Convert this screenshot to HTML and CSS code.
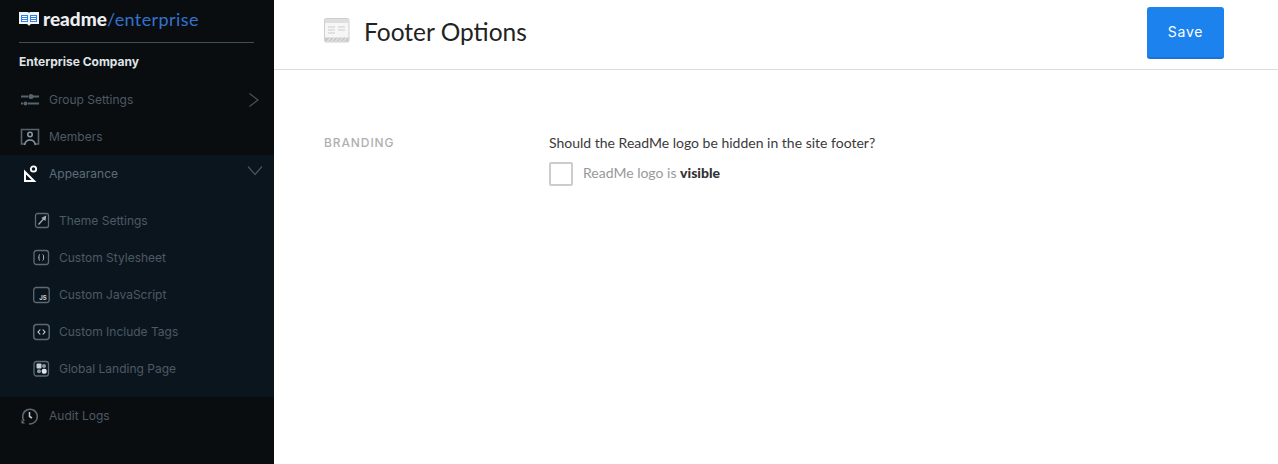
FILE: index.html
```html
<!DOCTYPE html>
<html lang="en">
<head>
    <meta charset="UTF-8">
    <title>Footer Options</title>
    <link rel="stylesheet" href="styles.css">
</head>
<body>
    <aside class="sidebar">
        <div class="brand">
            <svg class="brand-icon" width="20" height="14" viewBox="0 0 20 14">
                <path d="M0 0h8q2 0 2 1 0-1 2-1h8v12h-7.500q-1.500 0-2.500 2-1-2-2.500-2H0z" fill="#f2f4f5"/>
                <rect x="2" y="3" width="7" height="7" fill="#2f7fe8"/>
                <rect x="11" y="3" width="7" height="7" fill="#2f7fe8"/>
                <path d="M3 4.500h5M3 6.500h5M3 8.500h5M12 4.500h5M12 6.500h5M12 8.500h5" stroke="#fff" stroke-width="1"/>
            </svg>
            <span class="brand-name">readme</span><span class="brand-suffix">/enterprise</span>
        </div>
        <div class="company">Enterprise Company</div>

        <a class="nav-item">
            <svg class="nav-icon" width="20" height="20" viewBox="0 0 20 20">
                <path d="M1 6.500h7M13 6.500h6M1 13.500h2M8 13.500h11" stroke="#56646f" stroke-width="2"/>
                <circle cx="11" cy="6.500" r="2.500" fill="#56646f"/>
                <circle cx="5.500" cy="13.500" r="2" fill="#56646f"/>
            </svg>
            Group Settings
            <svg class="chevron" width="12" height="16" viewBox="0 0 12 16"><path d="M1.500 1.500 10 8l-8.500 6.500" fill="none" stroke="#46535e" stroke-width="1.200"/></svg>
        </a>
        <a class="nav-item">
            <svg class="nav-icon" width="20" height="20" viewBox="0 0 20 20">
                <path d="M4 17H1.500V2.500h17V17H16" fill="none" stroke="#56646f" stroke-width="1.600"/>
                <circle cx="10" cy="7.500" r="2.200" fill="none" stroke="#8a98a2" stroke-width="1.600"/>
                <path d="M4.500 18q1-5 5.500-5t5.500 5" fill="none" stroke="#8a98a2" stroke-width="1.600"/>
            </svg>
            Members
        </a>

        <div class="nav-group">
            <a class="nav-item nav-item-open">
                <svg class="nav-icon" width="20" height="20" viewBox="0 0 20 20">
                    <path d="M5 8v9h9z" fill="none" stroke="#fff" stroke-width="2"/>
                    <circle cx="13.500" cy="5" r="2.700" fill="none" stroke="#fff" stroke-width="1.800"/>
                </svg>
                Appearance
                <svg class="chevron chevron-down" width="16" height="12" viewBox="0 0 16 12"><path d="M1 1.500 8 9.500l7-8" fill="none" stroke="#46535e" stroke-width="1.200"/></svg>
            </a>
            <div class="sub-list">
                <a class="sub-item">
                    <svg class="sub-icon" width="18" height="18" viewBox="0 0 18 18">
                        <rect x="2.500" y="1.500" width="13" height="14" rx="2" fill="none" stroke="#5a6a76" stroke-width="1.300"/>
                        <path d="M5.500 12.500 10.500 7M9.500 6 12.500 4.500l-.5 3.500z" stroke="#a4b0b8" stroke-width="1.200" fill="#a4b0b8"/>
                    </svg>
                    Theme Settings
                </a>
                <a class="sub-item">
                    <svg class="sub-icon" width="18" height="18" viewBox="0 0 18 18">
                        <rect x="1" y="1.500" width="14.500" height="14" rx="2.500" fill="none" stroke="#5a6a76" stroke-width="1.300"/>
                        <path d="M7 5.500Q5.500 5.500 6 8.500L5.400 8.500 6 8.500Q5.500 11.500 7 11.500M9.500 5.500Q11 5.500 10.500 8.500L11.100 8.500 10.500 8.500Q11 11.500 9.500 11.500" fill="none" stroke="#a4b0b8" stroke-width="1"/>
                    </svg>
                    Custom Stylesheet
                </a>
                <a class="sub-item">
                    <svg class="sub-icon" width="18" height="18" viewBox="0 0 18 18">
                        <rect x="0.700" y="1.500" width="15.500" height="15" rx="2.500" fill="none" stroke="#5a6a76" stroke-width="1.300"/>
                        <text x="6.200" y="13.500" class="js-text">JS</text>
                    </svg>
                    Custom JavaScript
                </a>
                <a class="sub-item">
                    <svg class="sub-icon" width="18" height="18" viewBox="0 0 18 18">
                        <rect x="0.700" y="1.500" width="15.500" height="15" rx="3" fill="none" stroke="#5a6a76" stroke-width="1.500"/>
                        <path d="M7.300 6.500 5 9l2.300 2.500M9.700 6.500 12 9l-2.300 2.500" fill="none" stroke="#d5dbde" stroke-width="1.100"/>
                    </svg>
                    Custom Include Tags
                </a>
                <a class="sub-item">
                    <svg class="sub-icon" width="18" height="18" viewBox="0 0 18 18">
                        <rect x="1" y="1.500" width="14.500" height="14.500" rx="2.500" fill="none" stroke="#5a6a76" stroke-width="1.300"/>
                        <rect x="3.500" y="3.500" width="5" height="5" rx="1" fill="#c8d0d5"/>
                        <circle cx="11" cy="6" r="2" fill="#8a98a2"/>
                        <circle cx="6" cy="11.200" r="2" fill="#8a98a2"/>
                        <rect x="8.700" y="8.800" width="5" height="5" rx="2" fill="#e2e6e8"/>
                    </svg>
                    Global Landing Page
                </a>
            </div>
        </div>

        <a class="nav-item">
            <svg class="nav-icon" width="20" height="20" viewBox="0 0 20 20">
                <path d="M4.200 15A7.300 7.300 0 1 1 9 17.800" fill="none" stroke="#5a6a76" stroke-width="1.500"/>
                <path d="M1.500 13.500 5 17.500H1.500z" fill="#5a6a76"/>
                <path d="M9.500 6v4.500l2.500 1.500" fill="none" stroke="#c0c8cd" stroke-width="1.500"/>
            </svg>
            Audit Logs
        </a>
    </aside>

    <div class="main">
        <header class="page-header">
            <svg class="page-icon" width="26" height="25" viewBox="0 0 26 25">
                <rect x="0.500" y="0.500" width="24.500" height="23.500" rx="1.500" fill="#f6f6f6" stroke="#cfcfcf"/>
                <rect x="1" y="1" width="23.500" height="4" fill="#dedede"/>
                <path d="M4 9h7M14 9h7M4 12h7M14 12h7M4 15h7" stroke="#cccccc" stroke-width="1.200"/>
                <rect x="1" y="19.500" width="23.500" height="4" fill="#c8c8c8"/>
                <path d="M3 23.500l4-4M7 23.500l4-4M11 23.500l4-4M15 23.500l4-4M19 23.500l4-4" stroke="#f4f4f4"/>
            </svg>
            <h1 class="page-title">Footer Options</h1>
            <button class="save-btn">Save</button>
        </header>

        <section class="settings-row">
            <h2 class="section-label">BRANDING</h2>
            <div class="section-body">
                <p class="question">Should the ReadMe logo be hidden in the site footer?</p>
                <label class="check-row">
                    <span class="checkbox"></span>
                    <span class="check-text">ReadMe logo is <b>visible</b></span>
                </label>
            </div>
        </section>
    </div>
</body>
</html>
```

FILE: styles.css
```css
:root {
    --side-bg: #0a0d10;
    --group-bg: #0b151d;
    --side-text: #4c5a65;
    --primary: #1c82ee;
}

* {
    box-sizing: border-box;
    margin: 0;
    padding: 0;
}

html, body {
    height: 100%;
}

body {
    display: flex;
    background: white;
    font-family: Lato, "Liberation Sans", sans-serif;
    overflow: hidden;
}

/* sidebar */
.sidebar {
    width: 274px;
    flex-shrink: 0;
    background: var(--side-bg);
    font-family: Inter, "Liberation Sans", sans-serif;
    font-size: 12px;
    color: var(--side-text);
}

.brand {
    display: flex;
    align-items: center;
    height: 43px;
    margin: 0 20px 0 19px;
    border-bottom: 1px solid #3c505e;
    padding-bottom: 5px;
}

.brand-icon {
    margin-right: 4px;
}

.brand-name {
    font-family: Lato, sans-serif;
    font-weight: 900;
    font-size: 19px;
    color: #eceeef;
}

.brand-suffix {
    font-family: Lato, sans-serif;
    font-size: 18px;
    letter-spacing: 0.4px;
    color: #3273cc;
}

.company {
    height: 38px;
    padding: 11px 19px 0;
    font-size: 12px;
    font-weight: 700;
    color: #dfe4e7;
}

.nav-item {
    display: flex;
    align-items: center;
    height: 37px;
    padding-left: 20px;
}

.nav-icon {
    margin-right: 9px;
}

.chevron {
    margin-left: auto;
    margin-right: 14px;
}

.chevron-down {
    margin-right: 11px;
    margin-top: -6px;
}

.nav-group {
    background: var(--group-bg);
    height: 242px;
}

.nav-item-open {
    color: #5d6d79;
}

.sub-list {
    padding-top: 10px;
}

.sub-item {
    display: flex;
    align-items: center;
    height: 37px;
    padding-left: 33px;
}

.sub-icon {
    margin-right: 8px;
}

.js-text {
    font-size: 6px;
    font-weight: 700;
    fill: #c8d0d5;
}

/* main */
.main {
    flex: 1;
    min-width: 0;
}

.page-header {
    display: flex;
    align-items: center;
    height: 70px;
    padding: 0 54px 4px 50px;
    border-bottom: 1px solid #dcdcdc;
}

.page-icon {
    margin-right: 14px;
    margin-bottom: 5px;
}

.page-title {
    flex: 1;
    margin-bottom: 3px;
    font-size: 24.5px;
    font-weight: 400;
    color: #222222;
}

.save-btn {
    width: 77px;
    height: 52px;
    border: none;
    border-bottom: 2px solid #1a73d4;
    border-radius: 3px;
    background: var(--primary);
    color: white;
    font-family: Inter, sans-serif;
    font-size: 14px;
    letter-spacing: 0.8px;
}

.settings-row {
    display: flex;
    padding: 64px 50px 0;
}

.section-label {
    width: 225px;
    padding-top: 1px;
    font-family: Inter, sans-serif;
    font-size: 12px;
    font-weight: 500;
    letter-spacing: 0.9px;
    color: #b0b0b0;
}

.question {
    font-size: 14px;
    color: #3a3a3a;
}

.check-row {
    display: flex;
    align-items: center;
    margin-top: 11px;
}

.checkbox {
    width: 24px;
    height: 24px;
    margin-right: 10px;
    border: 2px solid #cccccc;
    border-radius: 2px;
}

.check-text {
    padding-bottom: 3px;
    font-size: 14px;
    color: #999999;
}

.check-text b {
    color: #333333;
    font-weight: 900;
}
```
